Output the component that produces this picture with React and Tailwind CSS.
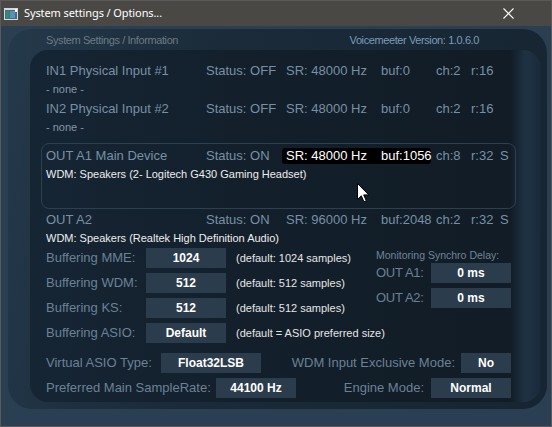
import React from 'react'

const lbl = 'text-[#7890a5]'

function DevRow({ label, status, sr, buf, ch, r, s, hi }) {
  return (
    <div className={`flex h-[18px] items-center text-[13px] whitespace-nowrap ${lbl}`}>
      <div className="w-[160px] shrink-0">{label}</div>
      <div className="w-[80px] shrink-0">{status}</div>
      {hi ? (
        <div className="flex h-[16px] items-center -ml-[4px] pl-[4px] bg-black rounded-[3px] text-white mr-[5px]">
          <div className="w-[95px] shrink-0">{sr}</div>
          <div className="w-[50px] shrink-0">{buf}</div>
        </div>
      ) : (
        <>
          <div className="w-[95px] shrink-0">{sr}</div>
          <div className="w-[55px] shrink-0">{buf}</div>
        </>
      )}
      <div className="w-[35px] shrink-0">{ch}</div>
      <div className="w-[29px] shrink-0">{r}</div>
      {s && <div>{s}</div>}
    </div>
  )
}

function Sub({ children, white }) {
  return (
    <div className={`flex h-[18px] items-center text-[11px] whitespace-nowrap ${white ? 'text-[#eeeeee]' : 'text-[#8496a6]'}`}>
      {children}
    </div>
  )
}

function Val({ w, children }) {
  return (
    <div className={`${w} shrink-0 h-[20px] flex items-center justify-center bg-[#2b3c4c] text-white font-bold text-[12px]`}>
      {children}
    </div>
  )
}

function BufRow({ label, value, def }) {
  return (
    <div className="flex h-[20px] items-center whitespace-nowrap">
      <div className="w-[100px] shrink-0 text-[13px] text-[#6b8196]">{label}</div>
      <Val w="w-[80px]">{value}</Val>
      <div className="ml-[10px] shrink-0 text-[11px] text-[#e6e6e6]">{def}</div>
    </div>
  )
}

function Cursor() {
  return (
    <svg className="absolute left-[356px] top-[182px]" width="13" height="20" viewBox="0 0 13 20">
      <path d="M0.5 0.5 L0.5 16.5 L4.3 12.8 L7 18.8 L9.3 17.8 L6.7 11.9 L11.8 11.9 Z" fill="#fff" stroke="#000" strokeWidth="1" />
    </svg>
  )
}

export default function App() {
  return (
    <div className="relative w-[552px] h-[427px] flex flex-col border border-[#5a5a5a] bg-[#2a3f51] overflow-hidden font-['Liberation_Sans',Arial,sans-serif]">
      {/* title bar */}
      <div className="h-[25px] flex items-center bg-[#4a4845] shrink-0">
        <svg className="ml-[3px]" width="14" height="12" viewBox="0 0 14 12">
          <rect x="0" y="0" width="14" height="12" fill="#d8d8d8" />
          <rect x="1" y="2" width="12" height="9" fill="#3d6f95" />
          <rect x="2" y="3" width="3" height="7" fill="#2e8d6a" />
          <rect x="6" y="3" width="5" height="7" fill="#5d8fb2" />
          <rect x="11" y="1" width="2" height="3" fill="#ffffff" />
        </svg>
        <div className="ml-[6px] text-[11px] tracking-[-0.1px] text-white font-['Noto_Sans',sans-serif]">System settings / Options...</div>
        <svg className="ml-auto mr-[37px]" width="11" height="11" viewBox="0 0 11 11">
          <path d="M0.5 0.5 L10.5 10.5 M10.5 0.5 L0.5 10.5" stroke="#fff" strokeWidth="1.1" />
        </svg>
      </div>

      {/* body */}
      <div className="flex-1 pl-[7px] pr-[4px] pt-[3px] pb-[17px]">
        <div className="h-full rounded-[24px] bg-[linear-gradient(100deg,#24394b_0%,#1b2b39_35%,#172532_100%)] flex flex-col">
          <div className="h-[21px] flex items-center justify-between pl-[38px] pr-[68px] whitespace-nowrap">
            <div className="text-[11px] tracking-[-0.4px] text-[#6c7a86] pt-[1px]">System Settings / Information</div>
            <div className="text-[11px] tracking-[-0.4px] text-[#7a9cb9] pt-[1px]">Voicemeeter Version: 1.0.6.0</div>
          </div>

          <div className="ml-[22px] mr-[6px] mb-[6px] h-[352px] rounded-[18px] bg-[linear-gradient(90deg,#162534_0%,#121e29_55%,#111c26_94%,#1f3244_97%,#19293a_100%)] pl-[16px] pt-[12px]">
            <DevRow label="IN1 Physical Input #1" status="Status: OFF" sr="SR: 48000 Hz" buf="buf:0" ch="ch:2" r="r:16" />
            <Sub>- none -</Sub>
            <div className="mt-[2px]">
              <DevRow label="IN2 Physical Input #2" status="Status: OFF" sr="SR: 48000 Hz" buf="buf:0" ch="ch:2" r="r:16" />
            </div>
            <Sub>- none -</Sub>

            <div className="mt-[7px] -ml-[5px] w-[475px] h-[66px] border border-[#2d4050] rounded-[8px] pl-[4px] pt-[3px]">
              <DevRow hi label="OUT A1 Main Device" status="Status: ON" sr="SR: 48000 Hz" buf="buf:1056" ch="ch:8" r="r:32" s="S" />
              <Sub white>WDM: Speakers (2- Logitech G430 Gaming Headset)</Sub>
            </div>

            <div className="mt-[2px]">
              <DevRow label="OUT A2" status="Status: ON" sr="SR: 96000 Hz" buf="buf:2048" ch="ch:2" r="r:32" s="S" />
            </div>
            <Sub white>WDM: Speakers (Realtek High Definition Audio)</Sub>

            <div className="mt-[1px] flex">
              <div className="w-[330px] shrink-0 flex flex-col gap-[5px]">
                <BufRow label="Buffering MME:" value="1024" def="(default: 1024 samples)" />
                <BufRow label="Buffering WDM:" value="512" def="(default: 512 samples)" />
                <BufRow label="Buffering KS:" value="512" def="(default: 512 samples)" />
                <BufRow label="Buffering ASIO:" value="Default" def="(default = ASIO preferred size)" />
              </div>
              <div className="flex flex-col">
                <div className="h-[15px] flex items-center text-[10.5px] text-[#6f8597] whitespace-nowrap">Monitoring Synchro Delay:</div>
                <div className="flex h-[20px] items-center">
                  <div className="w-[55px] shrink-0 text-[13px] tracking-[-0.3px] text-[#6b8196]">OUT A1:</div>
                  <Val w="w-[80px]">0 ms</Val>
                </div>
                <div className="flex h-[20px] items-center mt-[5px]">
                  <div className="w-[55px] shrink-0 text-[13px] tracking-[-0.3px] text-[#6b8196]">OUT A2:</div>
                  <Val w="w-[80px]">0 ms</Val>
                </div>
              </div>
            </div>

            <div className="mt-[10px] w-[465px] flex h-[20px] items-center justify-between whitespace-nowrap">
              <div className="flex items-center">
                <div className="w-[115px] shrink-0 text-[13px] text-[#6b8196]">Virtual ASIO Type:</div>
                <Val w="w-[100px]">Float32LSB</Val>
              </div>
              <div className="flex items-center gap-[6px]">
                <div className="text-[13px] text-[#6b8196]">WDM Input Exclusive Mode:</div>
                <Val w="w-[50px]">No</Val>
              </div>
            </div>
            <div className="mt-[5px] w-[465px] flex h-[20px] items-center justify-between whitespace-nowrap">
              <div className="flex items-center">
                <div className="w-[170px] shrink-0 text-[13px] text-[#6b8196]">Preferred Main SampleRate:</div>
                <Val w="w-[80px]">44100 Hz</Val>
              </div>
              <div className="flex items-center gap-[7px]">
                <div className="text-[13px] text-[#6b8196]">Engine Mode:</div>
                <Val w="w-[80px]">Normal</Val>
              </div>
            </div>
          </div>
        </div>
      </div>

      <Cursor />
    </div>
  )
}
